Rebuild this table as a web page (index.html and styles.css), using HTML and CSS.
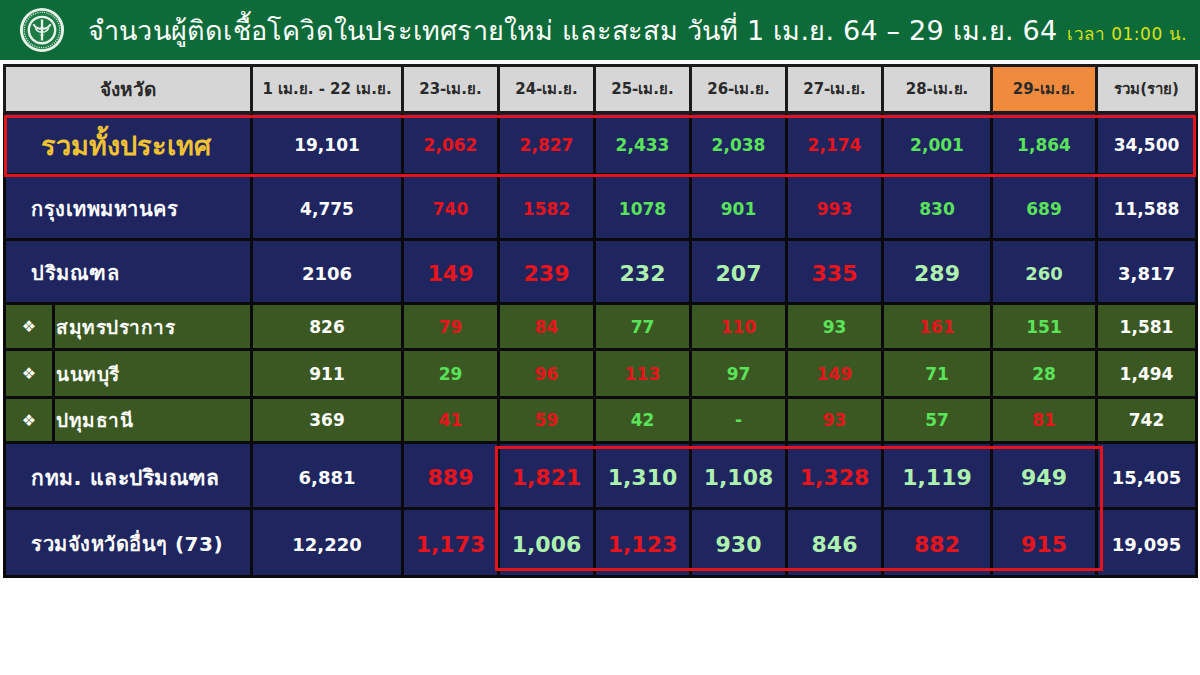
FILE: index.html
```html
<!DOCTYPE html>
<html lang="th">
<head>
<meta charset="utf-8">
<title>จำนวนผู้ติดเชื้อโควิด</title>
<link rel="stylesheet" href="styles.css">
</head>
<body>
<header class="titlebar">
  <svg class="logo" viewBox="0 0 48 48" width="46" height="46" aria-hidden="true">
    <circle cx="24" cy="24" r="23" fill="#e8f3ea"/>
    <circle cx="24" cy="24" r="20" fill="#1d7a45"/>
    <circle cx="24" cy="24" r="18.5" fill="none" stroke="#cfe6d5" stroke-width="1.4" stroke-dasharray="1.2 1.2"/>
    <circle cx="24" cy="24" r="15" fill="#e8f3ea"/>
    <circle cx="24" cy="24" r="12.5" fill="#1d7a45"/>
    <path d="M24 13 L24 35" stroke="#e8f3ea" stroke-width="2.4"/>
    <path d="M15 18 Q19 24 24 22 Q29 24 33 18" fill="none" stroke="#e8f3ea" stroke-width="2.2"/>
    <path d="M17 22 Q20 27 24 26 Q28 27 31 22" fill="none" stroke="#e8f3ea" stroke-width="1.6"/>
    <path d="M20.5 28 Q24 30.5 27.5 28 Q24 32.5 20.5 28Z" fill="#e8f3ea"/>
  </svg>
  <h1 class="title">จำนวนผู้ติดเชื้อโควิดในประเทศรายใหม่ และสะสม วันที่ 1 เม.ย. 64 – 29 เม.ย. 64</h1>
  <span class="time">เวลา 01:00 น.</span>
</header>

<main class="board">
  <table class="grid">
    <colgroup>
      <col class="c-bul"><col class="c-name"><col class="c-base">
      <col class="c-d"><col class="c-d"><col class="c-d"><col class="c-d"><col class="c-d"><col class="c-d28">
      <col class="c-d29"><col class="c-tot">
    </colgroup>
    <thead>
      <tr class="head">
        <th colspan="2" class="prov">จังหวัด</th>
        <th>1 เม.ย. - 22 เม.ย.</th>
        <th>23-เม.ย.</th>
        <th>24-เม.ย.</th>
        <th>25-เม.ย.</th>
        <th>26-เม.ย.</th>
        <th>27-เม.ย.</th>
        <th>28-เม.ย.</th>
        <th class="today">29-เม.ย.</th>
        <th>รวม(ราย)</th>
      </tr>
    </thead>
    <tbody>
      <tr class="navy r-nation">
        <td colspan="2" class="nation">รวมทั้งประเทศ</td>
        <td class="w">19,101</td>
        <td class="red">2,062</td>
        <td class="red">2,827</td>
        <td class="grn">2,433</td>
        <td class="grn">2,038</td>
        <td class="red">2,174</td>
        <td class="grn">2,001</td>
        <td class="grn">1,864</td>
        <td class="w">34,500</td>
      </tr>
      <tr class="navy r-bkk">
        <td colspan="2" class="name">กรุงเทพมหานคร</td>
        <td class="w">4,775</td>
        <td class="red">740</td>
        <td class="red">1582</td>
        <td class="grn">1078</td>
        <td class="grn">901</td>
        <td class="red">993</td>
        <td class="grn">830</td>
        <td class="grn">689</td>
        <td class="w">11,588</td>
      </tr>
      <tr class="navy r-big r-peri">
        <td colspan="2" class="name">ปริมณฑล</td>
        <td class="w sm">2106</td>
        <td class="red">149</td>
        <td class="red">239</td>
        <td class="pale">232</td>
        <td class="pale">207</td>
        <td class="red">335</td>
        <td class="pale">289</td>
        <td class="pale sm">260</td>
        <td class="w sm">3,817</td>
      </tr>
      <tr class="olive">
        <td class="bul">❖</td>
        <td class="sub">สมุทรปราการ</td>
        <td class="w">826</td>
        <td class="red">79</td>
        <td class="red">84</td>
        <td class="grn">77</td>
        <td class="red">110</td>
        <td class="grn">93</td>
        <td class="red">161</td>
        <td class="grn">151</td>
        <td class="w">1,581</td>
      </tr>
      <tr class="olive r-mid">
        <td class="bul">❖</td>
        <td class="sub">นนทบุรี</td>
        <td class="w">911</td>
        <td class="grn">29</td>
        <td class="red">96</td>
        <td class="red">113</td>
        <td class="grn">97</td>
        <td class="red">149</td>
        <td class="grn">71</td>
        <td class="grn">28</td>
        <td class="w">1,494</td>
      </tr>
      <tr class="olive r-last">
        <td class="bul">❖</td>
        <td class="sub">ปทุมธานี</td>
        <td class="w">369</td>
        <td class="red">41</td>
        <td class="red">59</td>
        <td class="grn">42</td>
        <td class="grn">-</td>
        <td class="red">93</td>
        <td class="grn">57</td>
        <td class="red">81</td>
        <td class="w">742</td>
      </tr>
      <tr class="navy r-big r-metro">
        <td colspan="2" class="name big">กทม. และปริมณฑล</td>
        <td class="w sm">6,881</td>
        <td class="red">889</td>
        <td class="red">1,821</td>
        <td class="pale">1,310</td>
        <td class="pale">1,108</td>
        <td class="red">1,328</td>
        <td class="pale">1,119</td>
        <td class="pale">949</td>
        <td class="w sm">15,405</td>
      </tr>
      <tr class="navy r-big r-other">
        <td colspan="2" class="name lg">รวมจังหวัดอื่นๆ (73)</td>
        <td class="w sm">12,220</td>
        <td class="red">1,173</td>
        <td class="pale">1,006</td>
        <td class="red">1,123</td>
        <td class="pale">930</td>
        <td class="pale">846</td>
        <td class="red">882</td>
        <td class="red">915</td>
        <td class="w sm">19,095</td>
      </tr>
    </tbody>
  </table>
  <div class="hl hl-nation" aria-hidden="true"></div>
  <div class="hl hl-block" aria-hidden="true"></div>
</main>
</body>
</html>
```

FILE: styles.css
```css
html, body {
  margin: 0;
  padding: 0;
  background: #ffffff;
}

body {
  width: 1200px;
  height: 675px;
  overflow: hidden;
  font-family: "Tahoma", "DejaVu Sans", "Noto Sans", sans-serif;
}

.titlebar {
  height: 60px;
  background: #0d6b39;
  display: flex;
  align-items: center;
  padding-left: 19px;
  box-sizing: border-box;
}

.logo {
  flex: none;
  display: block;
}

.title {
  margin: 0 0 0 23px;
  font-size: 27px;
  font-weight: normal;
  color: #ffffff;
  white-space: nowrap;
  letter-spacing: 0.2px;
}

.time {
  margin-left: 10px;
  margin-top: 6px;
  font-size: 17px;
  color: #d7e317;
  white-space: nowrap;
  letter-spacing: 0.5px;
}

.board {
  position: relative;
  margin: 4px 0 0 3px;
  width: 1194px;
}

.grid {
  width: 1194px;
  table-layout: fixed;
  border-collapse: collapse;
  border: 2px solid #3a3a3a;
}

.c-bul { width: 49px; }
.c-name { width: 198px; }
.c-base { width: 151px; }
.c-d { width: 96px; }
.c-d28 { width: 109px; }
.c-d29 { width: 105px; }
.c-tot { width: 100px; }

.grid th,
.grid td {
  border: 3px solid #0a0a0a;
  padding: 0;
  text-align: center;
  font-weight: bold;
  white-space: nowrap;
}

.head th {
  height: 44px;
  background: #d6d6d6;
  color: #2a2a2a;
  font-size: 15px;
  font-weight: 600;
  border-color: #1a1a1a;
}

.head th.prov {
  font-size: 19px;
}

.head th.today {
  background: #f08a3c;
}

.navy td {
  background: #1f255f;
  height: 56px;
  font-size: 17px;
  padding-top: 3px;
}

.r-bkk td { height: 59px; }
.r-peri td { height: 58px; }

.olive td {
  background: #3b5822;
  height: 43px;
  font-size: 17px;
}

.r-mid td { height: 45px; }
.r-last td { height: 42px; }

.r-big td { font-size: 22px; }
.r-big td.sm { font-size: 18px; }
.r-metro td { height: 60px; }
.r-other td { height: 62px; }

.nation {
  color: #f1c232;
  font-size: 27px !important;
  padding-right: 4px !important;
}

.name {
  text-align: left !important;
  padding-left: 25px !important;
  color: #ffffff;
  font-size: 20px !important;
  letter-spacing: 0.5px;
}

.name.big { font-size: 21px !important; }
.name.lg { font-size: 20px !important; }

.sub {
  text-align: left !important;
  color: #ffffff;
  font-size: 19px !important;
  padding-left: 1px !important;
  letter-spacing: 0.5px;
}

.bul {
  color: #ffffff;
  font-size: 16px !important;
}

.w { color: #ffffff; }
.red { color: #e8141c; }
.grn { color: #5be25b; }
.pale { color: #aef0ae; }

.hl {
  position: absolute;
  border: 3px solid #e3141b;
  box-sizing: border-box;
  pointer-events: none;
}

.hl-nation {
  left: 1px;
  top: 51px;
  width: 1192px;
  height: 62px;
}

.hl-block {
  left: 492px;
  top: 382px;
  width: 608px;
  height: 125px;
}
```
